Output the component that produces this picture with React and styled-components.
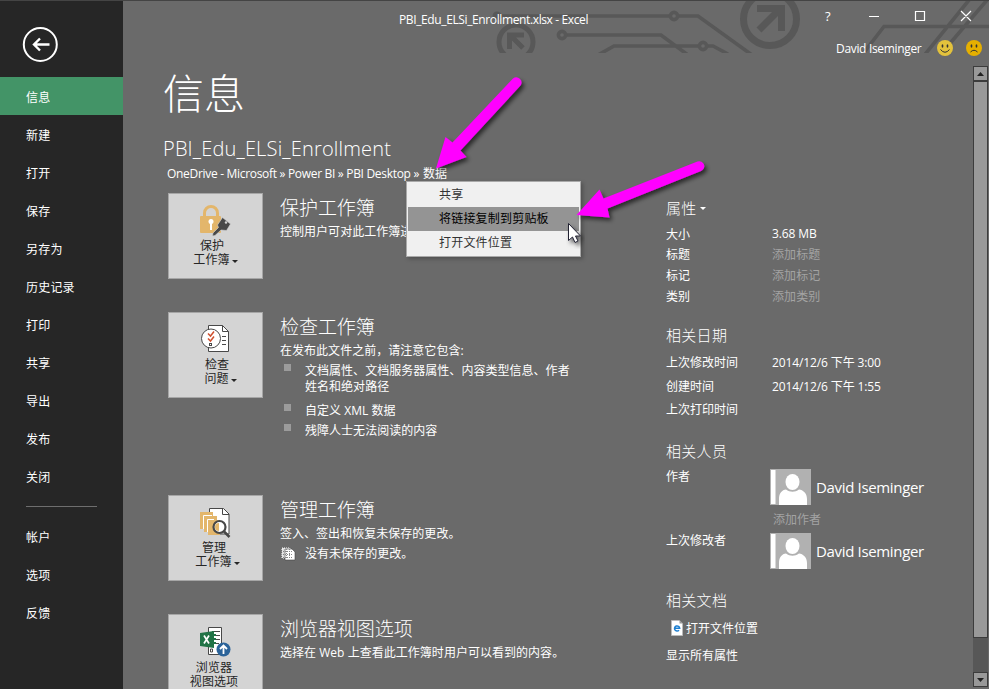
import React from 'react';
import styled, { createGlobalStyle } from 'styled-components';

const GlobalStyle = createGlobalStyle`
  * { box-sizing: border-box; }
  body {
    margin: 0;
    overflow: hidden;
    background: #6a6a6a;
    color: #fff;
    font-family: "Open Sans", "Noto Sans CJK SC", sans-serif;
    font-size: 12px;
  }
  ul { list-style: none; margin: 0; padding: 0; }
  h1, h2, h3 { margin: 0; font-weight: 300; }
  p { margin: 0; }
  svg { display: block; flex: none; }
`;

const Window = styled.div`
  position: relative;
  display: grid;
  grid-template-columns: 123px 1fr;
  width: 989px;
  height: 689px;
  overflow: hidden;
  border-top: 1px solid #444;
  background: #6a6a6a;
`;

const Sidebar = styled.nav`
  background: #262626;
  padding-top: 26px;
`;

const BackButton = styled.button`
  display: block;
  width: 36px;
  height: 36px;
  margin: 0 0 14px 22px;
  padding: 0;
  border: 0;
  background: none;
`;

const NavItem = styled.a`
  display: flex;
  align-items: center;
  height: 38px;
  padding: 1px 0 0 26px;
  letter-spacing: 0.2px;
  background: ${(p) => (p.$active ? '#439467' : 'transparent')};
`;

const NavDivider = styled.div`
  width: 71px;
  height: 1px;
  margin: 11px 0 10px 26px;
  background: #6e6e6e;
`;

const Main = styled.main`
  display: flex;
  flex-direction: column;
  min-width: 0;
  height: 688px;
`;

const Header = styled.header`
  position: relative;
  flex: none;
  height: 65px;
`;

const Circuit = styled.svg`
  position: absolute;
  left: 0;
  top: 0;
`;

const TitleRow = styled.div`
  position: relative;
  display: flex;
  align-items: center;
  height: 32px;
  padding-top: 4px;
`;

const WindowTitle = styled.div`
  width: 189px;
  margin-left: 276px;
  white-space: nowrap;
  letter-spacing: -0.38px;
`;

const WindowButtons = styled.div`
  display: flex;
  align-items: center;
  margin: -7px 0 0 233px;
  height: 26px;
`;

const HelpButton = styled.span`
  width: 47px;
  padding-left: 4px;
  font-size: 13px;
`;

const UserRow = styled.div`
  position: relative;
  display: flex;
  align-items: center;
  height: 30px;
  padding-left: 713px;
  white-space: nowrap;

  svg { margin-left: 15px; }
  svg + svg { margin-left: 13px; }
`;

const UserName = styled.span`
  width: 86px;
  letter-spacing: -0.33px;
`;

const Body = styled.div`
  display: flex;
  flex: 1;
  min-height: 0;
`;

const Content = styled.div`
  flex: 1;
  min-width: 0;
  padding-left: 40px;
`;

const PageTitle = styled.h1`
  height: 54px;
  line-height: 54px;
  font-size: 41px;
  font-weight: 300;
`;

const FileName = styled.h2`
  height: 30px;
  margin-top: 14px;
  line-height: 30px;
  font-size: 20px;
  letter-spacing: 0.18px;
  white-space: nowrap;
`;

const Breadcrumb = styled.div`
  position: relative;
  height: 20px;
  padding-left: 4px;
  line-height: 20px;
  white-space: nowrap;
  display: flex;
`;

const CrumbPath = styled.span`
  width: 256px;
  letter-spacing: -0.31px;
`;

const Menu = styled.ul`
  && {
    position: absolute;
    left: 243px;
    top: 17px;
    z-index: 2;
    width: 175px;
    height: 76px;
    padding: 1px;
    border: 1px solid #a9a9a9;
    background: #f0f0f0;
    box-shadow: 2px 2px 4px rgba(0, 0, 0, 0.25);
  }
`;

const MenuItem = styled.li`
  height: 24px;
  padding-left: 31px;
  line-height: 24px;
  letter-spacing: 0.2px;
  color: ${(p) => (p.$active ? '#000' : '#333')};
  background: ${(p) => (p.$active ? '#949494' : 'transparent')};
`;

const Columns = styled.div`
  display: grid;
  grid-template-columns: 498px 1fr;
  padding: 9px 0 0 5px;
`;

const Section = styled.section`
  display: flex;
  gap: 17px;
  height: ${(p) => p.$height}px;
`;

const Tile = styled.button`
  display: flex;
  flex: none;
  flex-direction: column;
  align-items: center;
  width: 95px;
  height: 86px;
  padding: 11px 0 0;
  border: 1px solid #a6a6a6;
  background: #d4d4d4;
  color: #262626;
  font: inherit;
  line-height: 14px;
  letter-spacing: 0.1px;
`;

const TileLabel = styled.span`
  display: flex;
  align-items: center;
  margin-top: ${(p) => p.$gap || 0}px;
  margin-left: ${(p) => p.$shift || 0}px;
  white-space: nowrap;
`;

const Caret = styled.span`
  margin: ${(p) => p.$top || 2}px 0 0 ${(p) => p.$left || 2}px;
  border: 3px solid transparent;
  border-top-color: currentColor;
  border-bottom: 0;
`;

const SectionText = styled.div`
  width: 300px;
  padding-top: 1px;
  line-height: 16px;
  letter-spacing: 0.03px;
`;

const SectionTitle = styled.h2`
  height: 30px;
  line-height: 28px;
  font-size: 19px;
  letter-spacing: -0.05px;
`;

const Bullet = styled.li`
  position: relative;
  display: flex;
  gap: 14px;
  margin-top: ${(p) => p.$gap}px;

  &::before {
    content: '';
    flex: none;
    width: 7px;
    height: 7px;
    margin: 1px 0 0 4px;
    background: #9b9b9b;
  }
`;

const Draft = styled.div`
  display: flex;
  align-items: center;
  gap: 9px;
  margin-top: 4px;
`;

const PropHeading = styled.h3`
  display: flex;
  align-items: center;
  height: 31px;
  margin-top: ${(p) => p.$gap || 0}px;
  padding-bottom: 2px;
  font-size: 15px;
  letter-spacing: 0.3px;
`;

const PropRow = styled.div`
  display: grid;
  grid-template-columns: 106px 1fr;
  align-items: center;
  height: ${(p) => p.$height}px;
  padding-bottom: 1px;
`;

const PropValue = styled.span`
  color: ${(p) => (p.$muted ? '#a3a3a3' : '#fff')};
  letter-spacing: ${(p) => (p.$muted ? '0.1px' : '-0.12px')};
`;

const PersonRow = styled.div`
  display: grid;
  grid-template-columns: 104px 1fr;
  height: ${(p) => p.$height}px;
  line-height: 19px;
`;

const Person = styled.div`
  display: flex;
  align-items: center;
  height: 36px;
  margin-top: 2px;
  gap: 5px;
  font-size: 15px;
  letter-spacing: -0.34px;
  white-space: nowrap;
`;

const AddAuthor = styled.div`
  padding: 5px 0 0 3px;
  color: #a3a3a3;
`;

const LinkRow = styled.div`
  display: flex;
  align-items: center;
  gap: 3px;
  height: 24px;
  margin-top: ${(p) => p.$gap || 0}px;
  padding: 0 0 1px ${(p) => p.$indent || 0}px;
`;

const ScrollBar = styled.div`
  display: flex;
  flex-direction: column;
  flex: none;
  width: 15px;
  height: 621px;
  margin-right: 1px;
  background: #575757;
`;

const ScrollButton = styled.div`
  display: flex;
  align-items: center;
  justify-content: center;
  height: 15px;
  border: 1px solid #3c3c3c;
  background: #999;
`;

const ScrollThumb = styled.div`
  height: 557px;
  border: 1px solid #3c3c3c;
  background: #999;
`;

const ScrollTrack = styled.div`
  flex: 1;
`;

const Annotations = styled.svg`
  position: absolute;
  left: 0;
  top: -1px;
  z-index: 3;
  pointer-events: none;
`;

function HeaderCircuit() {
  return (
    <Circuit width="866" height="52" viewBox="123 1 866 52" fill="none" stroke="#585858" strokeWidth="3.6">
      <circle cx="497" cy="16" r="4.5" fill="#585858" stroke="none" />
      <path d="M497 16H670M678 16H698L752 55" />
      <circle cx="674" cy="16" r="3.6" />
      <path d="M566 35H661L688 55M598 55L614 46H699M707 46H713L728 54" />
      <circle cx="562" cy="35" r="3.6" />
      <circle cx="703" cy="46" r="3.6" />
      <circle cx="770" cy="19" r="26.5" strokeWidth="7" />
      <path d="M757 8.5H781.5V31M759 30L780 9" strokeWidth="7" />
      <circle cx="516" cy="42" r="17" strokeWidth="5" />
      <path d="M524 35H509.500V49M510 35L523 48" strokeWidth="5" />
      <path d="M862 55L884 26.500H989M924.500 55L969 0M941 54L987 0" />
    </Circuit>
  );
}

function Face({ sad }) {
  return (
    <svg width="16" height="16" viewBox="0 0 16 16">
      <circle cx="8" cy="8" r="8" fill={sad ? '#e6b000' : '#e3c23c'} />
      <ellipse cx="5.500" cy="6" rx=".9" ry="1.700" fill="#333" />
      <ellipse cx="10.500" cy="6" rx=".9" ry="1.700" fill="#333" />
      <path d={sad ? 'M4.500 12Q8 8.500 11.500 12' : 'M3.500 9.500Q8 15 12.500 9.500'} fill="none" stroke="#333" />
    </svg>
  );
}

function LockIcon() {
  return (
    <svg width="31" height="32" viewBox="0 0 31 32">
      <path d="M4.500 12V8a6.500 6.500 0 0 1 13 0v4" fill="none" stroke="#e3b66b" strokeWidth="3" />
      <rect y="11" width="21" height="17" rx="1" fill="#e3b66b" />
      <circle cx="11" cy="16.500" r="2.500" fill="#fff" />
      <path d="M10 17h2v8h-2z" fill="#fff" />
      <path
        d="M22.500 12.500l8 6.500-4 6.500-5.500-.500-6 5.500-2.500.500.500-3 5.500-5.500-1-2.500z"
        fill="#484848"
        stroke="#d4d4d4"
        strokeWidth=".6"
      />
      <circle cx="26" cy="17.500" r="1.200" fill="#d4d4d4" />
    </svg>
  );
}

function InspectIcon() {
  return (
    <svg width="29" height="30" viewBox="0 0 29 30" fill="none" stroke="#484848">
      <path d="M7.500 1.500h14l6 6v20h-20z" fill="#fff" />
      <path d="M21.500 1.500v6h6M21 12.500h4M21 16.500h4M21 20.500h4" />
      <circle cx="10" cy="14.500" r="9.500" fill="#fff" />
      <path d="M7 9.500l2.500 2.500L13 7.500M7 14.500l2.500 2.500 3.500-4.500" stroke="#d0502f" strokeWidth="1.500" />
      <rect x="8.500" y="19.500" width="2" height="2" />
    </svg>
  );
}

function ManageIcon() {
  return (
    <svg width="31" height="32" viewBox="0 0 31 32" fill="none" stroke="#484848">
      <path d="M9.500 1.500h14l5.500 5.500v20H9.500z" fill="#fff" />
      <path d="M22.500 1.500v6H29" />
      <path d="M0 5h13v17H0zM4 9h13v16H4zM8 13h12v15H8z" fill="#e3b66b" stroke="none" />
      <path d="M3.500 22V8.500H12M7.500 25V12.500H14" stroke="#fff" />
      <circle cx="19.500" cy="20" r="6" fill="#fff" strokeWidth="2.200" />
      <path d="M19 16a4 4 0 0 0 0 8z" fill="#e3b66b" stroke="none" />
      <path d="M24 24.500l5.500 5.500" strokeWidth="2.500" />
    </svg>
  );
}

function BrowserViewIcon() {
  return (
    <svg width="31" height="32" viewBox="0 0 31 32" fill="none">
      <path d="M8.500 1.500h13v27h-13z" fill="#fff" stroke="#484848" />
      <path d="M12 5.500h8M15 9.500h5M16 13.500h4M16 17.500h3" stroke="#484848" />
      <path d="M0 7l14-2v17L0 20z" fill="#217346" />
      <path d="M4 9.500l5 8M9 9.500l-5 8" stroke="#fff" strokeWidth="1.700" />
      <path d="M14 8h2v2h-2zM14 12h2v2h-2zM14 16h2v2h-2z" fill="#217346" />
      <path d="M10.500 23v3h2v-3z" stroke="#484848" />
      <circle cx="23.500" cy="23.500" r="7" fill="#2b6399" />
      <path d="M23.500 28v-8M20 23l3.500-3.500L27 23" stroke="#fff" strokeWidth="1.800" />
    </svg>
  );
}

function DraftsIcon() {
  return (
    <svg width="16" height="14" viewBox="0 0 16 14">
      <path d="M2 1h8v10H2z" fill="#ddd" stroke="#fff" strokeDasharray="1 1" />
      <path d="M5 2h7l3 3v8H5z" fill="#fff" stroke="#444" strokeWidth=".6" />
      <path d="M1 4.500h11M1 7.500h11M3 10.500h9M6.500 2v10M9.500 2v10" stroke="#888" strokeDasharray="1 1" />
    </svg>
  );
}

function Avatar() {
  return (
    <svg width="41" height="36" viewBox="0 0 41 36">
      <path d="M0 0h41v36H0z" fill="#b1b1b1" />
      <path d="M1 1h4.500v34H1z" fill="#fff" />
      <ellipse cx="22.500" cy="13" rx="7" ry="8" fill="#fff" />
      <path d="M9 36V30c0-6 3-9 7-9.500 4 3 9 3 13 0 4 .5 8 3.500 8 9.500v6z" fill="#fff" />
    </svg>
  );
}

function PageIcon() {
  return (
    <svg width="12" height="16" viewBox="0 0 12 16">
      <path d="M.500.500h8l3 3v12H.500z" fill="#fff" stroke="#bbb" />
      <path d="M8.500 0v3.500H12" fill="#999" />
      <path d="M3.500 8.300h5.200A2.600 2.600 0 1 0 8 10.300" fill="none" stroke="#1d7fd1" strokeWidth="1.500" />
    </svg>
  );
}

function Callouts() {
  return (
    <Annotations width="989" height="689" viewBox="0 0 989 689">
      <defs>
        <filter id="soft" x="-20%" y="-20%" width="150%" height="150%">
          <feDropShadow dx="2.500" dy="3" stdDeviation="2.200" floodOpacity=".6" />
        </filter>
      </defs>
      <g fill="#f0f" filter="url(#soft)">
        <path d="M513 78.500A5.200 5.200 0 0 1 520.500 85.500L460.500 150.500 466.500 157 436 168.500 445.500 137 452.500 142.500z" />
        <path d="M697.500 161.500A5 5 0 0 1 701 171L607.500 208.500 609.500 217.500 576.500 215 599.500 189.500 603.500 198.500z" />
      </g>
      <path
        d="M568.500 223.500v17l4-3.500 2.500 5.500 3-1.500-2.500-5h5z"
        fill="#fff"
        stroke="#223"
        filter="url(#soft)"
      />
    </Annotations>
  );
}

const primaryNav = ['信息', '新建', '打开', '保存', '另存为', '历史记录', '打印', '共享', '导出', '发布', '关闭'];
const secondaryNav = ['帐户', '选项', '反馈'];

const details = [
  ['大小', '3.68 MB', false, 20],
  ['标题', '添加标题', true, 21],
  ['标记', '添加标记', true, 21],
  ['类别', '添加类别', true, 21],
];

const dates = [
  ['上次修改时间', '2014/12/6 下午 3:00', 23],
  ['创建时间', '2014/12/6 下午 1:55', 24],
  ['上次打印时间', '', 23],
];

function Properties() {
  return (
    <div>
      <PropHeading>属性<Caret $top={1} $left={3} /></PropHeading>
      {details.map(([label, value, muted, height]) => (
        <PropRow key={label} $height={height}>
          <span>{label}</span>
          <PropValue $muted={muted}>{value}</PropValue>
        </PropRow>
      ))}
      <PropHeading $gap={13}>相关日期</PropHeading>
      {dates.map(([label, value, height]) => (
        <PropRow key={label} $height={height}>
          <span>{label}</span>
          <PropValue>{value}</PropValue>
        </PropRow>
      ))}
      <PropHeading $gap={15}>相关人员</PropHeading>
      <PersonRow $height={64}>
        <span>作者</span>
        <div>
          <Person><Avatar />David Iseminger</Person>
          <AddAuthor>添加作者</AddAuthor>
        </div>
      </PersonRow>
      <PersonRow $height={39}>
        <span>上次修改者</span>
        <Person><Avatar />David Iseminger</Person>
      </PersonRow>
      <PropHeading $gap={15}>相关文档</PropHeading>
      <LinkRow $indent={5}><PageIcon />打开文件位置</LinkRow>
      <LinkRow $gap={3}>显示所有属性</LinkRow>
    </div>
  );
}

export default function App() {
  return (
    <Window>
      <GlobalStyle />
      <Sidebar>
        <BackButton aria-label="返回">
          <svg width="36" height="36" viewBox="0 0 36 36" fill="none" stroke="#fff" strokeWidth="2">
            <circle cx="18.300" cy="17.500" r="16.500" />
            <path d="M27.500 17.500H11.500M18 11.500l-6 6 6 6" strokeWidth="2.400" />
          </svg>
        </BackButton>
        {primaryNav.map((label, i) => <NavItem key={label} $active={i === 0}>{label}</NavItem>)}
        <NavDivider />
        {secondaryNav.map((label) => <NavItem key={label}>{label}</NavItem>)}
      </Sidebar>
      <Main>
        <Header>
          <HeaderCircuit />
          <TitleRow>
            <WindowTitle>PBI_Edu_ELSi_Enrollment.xlsx - Excel</WindowTitle>
            <WindowButtons>
              <HelpButton>?</HelpButton>
              <svg width="104" height="12" viewBox="0 0 104 12" fill="none" stroke="#fff">
                <path d="M1 6.500h10M47.500 1.500h9v9h-9zM93 1l10 10M103 1L93 11" strokeWidth="1.200" />
              </svg>
            </WindowButtons>
          </TitleRow>
          <UserRow>
            <UserName>David Iseminger</UserName>
            <Face />
            <Face sad />
          </UserRow>
        </Header>
        <Body>
          <Content>
            <PageTitle>信息</PageTitle>
            <FileName>PBI_Edu_ELSi_Enrollment</FileName>
            <Breadcrumb>
              <CrumbPath>OneDrive - Microsoft » Power BI » PBI Desktop »</CrumbPath>
              <span>数据</span>
              <Menu>
                <MenuItem>共享</MenuItem>
                <MenuItem $active>将链接复制到剪贴板</MenuItem>
                <MenuItem>打开文件位置</MenuItem>
              </Menu>
            </Breadcrumb>
            <Columns>
              <div>
                <Section $height={119}>
                  <Tile>
                    <LockIcon />
                    <TileLabel $gap={2} $shift={-7}>保护</TileLabel>
                    <TileLabel>工作簿<Caret /></TileLabel>
                  </Tile>
                  <SectionText>
                    <SectionTitle>保护工作簿</SectionTitle>
                    <p>控制用户可对此工作簿进行</p>
                  </SectionText>
                </Section>
                <Section $height={183}>
                  <Tile>
                    <InspectIcon />
                    <TileLabel $gap={4} $shift={3}>检查</TileLabel>
                    <TileLabel $shift={10}>问题<Caret /></TileLabel>
                  </Tile>
                  <SectionText>
                    <SectionTitle>检查工作簿</SectionTitle>
                    <p>在发布此文件之前，请注意它包含:</p>
                    <ul>
                      <Bullet $gap={4}><span>文档属性、文档服务器属性、内容类型信息、作者<br />姓名和绝对路径</span></Bullet>
                      <Bullet $gap={8}>自定义 XML 数据</Bullet>
                      <Bullet $gap={4}>残障人士无法阅读的内容</Bullet>
                    </ul>
                  </SectionText>
                </Section>
                <Section $height={119}>
                  <Tile>
                    <ManageIcon />
                    <TileLabel $gap={2} $shift={-3}>管理</TileLabel>
                    <TileLabel $shift={4}>工作簿<Caret /></TileLabel>
                  </Tile>
                  <SectionText>
                    <SectionTitle>管理工作簿</SectionTitle>
                    <p>签入、签出和恢复未保存的更改。</p>
                    <Draft><DraftsIcon />没有未保存的更改。</Draft>
                  </SectionText>
                </Section>
                <Section $height={86}>
                  <Tile>
                    <BrowserViewIcon />
                    <TileLabel $gap={3} $shift={-3}>浏览器</TileLabel>
                    <TileLabel $shift={-3}>视图选项</TileLabel>
                  </Tile>
                  <SectionText>
                    <SectionTitle>浏览器视图选项</SectionTitle>
                    <p>选择在 Web 上查看此工作簿时用户可以看到的内容。</p>
                  </SectionText>
                </Section>
              </div>
              <Properties />
            </Columns>
          </Content>
          <ScrollBar>
            <ScrollButton>
              <svg width="7" height="4" viewBox="0 0 7 4"><path d="M0 4L3.500 0 7 4z" fill="#222" /></svg>
            </ScrollButton>
            <ScrollThumb />
            <ScrollTrack />
            <ScrollButton>
              <svg width="7" height="4" viewBox="0 0 7 4"><path d="M0 0h7L3.500 4z" fill="#222" /></svg>
            </ScrollButton>
          </ScrollBar>
        </Body>
      </Main>
      <Callouts />
    </Window>
  );
}
